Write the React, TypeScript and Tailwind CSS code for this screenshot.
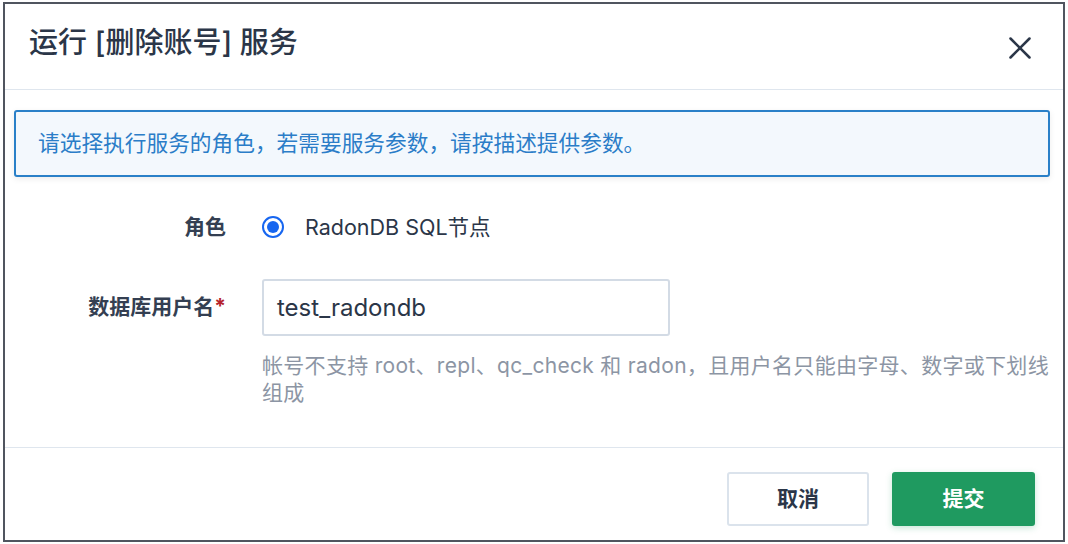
import { X } from 'lucide-react';

const font = { fontFamily: 'Inter, "Noto Sans CJK SC", sans-serif' };

export default function App() {
  return (
    <div className="w-[1068px] h-[544px] bg-white pt-[2px] pb-[2px] pl-[3px] pr-[3px]" style={font}>
      <div className="h-full border-2 border-[#50555f] bg-white flex flex-col">
        {/* header */}
        <div className="h-[86px] flex items-center justify-between pl-6 pr-[24px] border-b border-[#dfe6ee] shrink-0">
          <h1 className="text-[29px] text-[#2b3648] font-medium leading-none -mt-[8px]">运行 [删除账号] 服务</h1>
          <button className="text-[#2b3648] mt-[2px]">
            <X size={38} strokeWidth={1.6} />
          </button>
        </div>

        {/* body */}
        <div className="flex-1 pt-5">
          <div className="ml-[9px] mr-[13px] h-[67px] border-2 border-[#2a80c8] bg-[#f3f8fd] rounded-[3px] shadow-[0_2px_6px_rgba(0,0,0,0.08)] flex items-center px-[22px]">
            <p className="text-[21.7px] text-[#2b7dc8] -mt-[1px]">请选择执行服务的角色，若需要服务参数，请按描述提供参数。</p>
          </div>

          <div className="mt-[30px] flex items-center h-[40px]">
            <div className="w-[221px] text-right text-[21px] font-bold text-[#343f52]">角色</div>
            <div className="ml-[36px] flex items-center gap-[21px]">
              <span className="w-[22px] h-[22px] rounded-full border-2 border-[#1766f0] flex items-center justify-center">
                <span className="w-[12px] h-[12px] rounded-full bg-[#1766f0]" />
              </span>
              <span className="text-[21.5px] text-[#2b3648]">RadonDB SQL节点</span>
            </div>
          </div>

          <div className="mt-[32px] flex items-start">
            <div className="w-[221px] text-right text-[21px] font-bold text-[#343f52] pt-[12px]">
              数据库用户名<span className="text-[#b5232b]">*</span>
            </div>
            <div className="ml-[36px] flex-1 pr-2">
              <div className="w-[408px] h-[57px] border-2 border-[#d3dbe5] rounded-[3px] flex items-center px-[13px]">
                <span className="text-[24px] text-[#2b3648]">test_radondb</span>
              </div>
              <p className="mt-[16px] text-[21px] leading-[27px] tracking-[0.3px] text-[#8c95a4]">
                帐号不支持 root、repl、qc_check 和 radon，且用户名只能由字母、数字或下划线组成
              </p>
            </div>
          </div>
        </div>

        {/* footer */}
        <div className="h-[93px] border-t border-[#dfe6ee] flex items-start justify-end gap-[23px] pr-[28px] pt-[24px] shrink-0">
          <button className="w-[142px] h-[54px] border-2 border-[#dbe3ec] rounded-[3px] bg-white text-[21px] font-bold text-[#2b3648]">
            取消
          </button>
          <button className="w-[143px] h-[54px] rounded-[3px] bg-[#1f9a60] text-[21px] font-bold text-white shadow-[0_2px_6px_rgba(31,154,96,0.25)]">
            提交
          </button>
        </div>
      </div>
    </div>
  );
}
